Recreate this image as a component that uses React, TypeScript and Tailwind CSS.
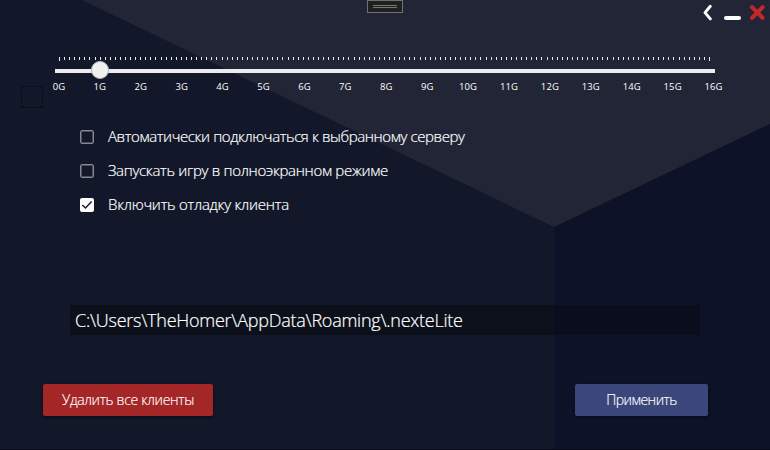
import React, { useState } from "react";

const TICKS = Array.from({ length: 129 }, (_, i) => i);
const LABELS = Array.from({ length: 17 }, (_, i) => `${i}G`);

function Background() {
  return (
    <svg className="absolute inset-0 -z-10 h-full w-full" viewBox="0 0 770 450" aria-hidden="true">
      <rect width="770" height="450" fill="#121729" />
      <path d="M554 227L770 124V450H554Z" fill="#0e1228" />
      <path d="M82 0H770V124L554 227Z" fill="#222535" />
      <rect y="449" width="770" height="1" fill="#080b18" />
    </svg>
  );
}

function TitleBar() {
  return (
    <header className="flex h-[26px] items-start pl-[367px] pr-[5px]">
      <div className="flex h-[13px] w-9 flex-col items-center justify-center gap-px border border-[#70716e] bg-[#1f211e]">
        <span className="h-px w-6 bg-[#777875]" />
        <span className="h-px w-6 bg-[#777875]" />
      </div>
      <div className="ml-auto flex h-[26px] items-center">
        <button aria-label="Назад" className="h-[26px] w-[10px]">
          <svg width="10" height="26" viewBox="0 0 10 26" fill="none" stroke="#fff" strokeWidth="3" strokeLinecap="round" strokeLinejoin="round">
            <path d="M7.3 6.3L2 12.6L7.3 18.9" />
          </svg>
        </button>
        <button aria-label="Свернуть" className="ml-[11px] mt-[10px] h-1 w-[17px] rounded-full bg-white" />
        <button aria-label="Закрыть" className="ml-2 h-[26px] w-4">
          <svg width="16" height="26" viewBox="0 0 16 26" fill="none" stroke="#c32828" strokeWidth="4" strokeLinecap="round">
            <path d="M3 7.2L13.6 17.8M13.6 7.2L3 17.8" />
          </svg>
        </button>
      </div>
    </header>
  );
}

function MemorySlider() {
  return (
    <section className="pt-[31px]">
      <div className="ml-[59px] flex h-[12px] w-[652.5px] items-start justify-between">
        {TICKS.map((i) => (
          <span key={i} className={i === 0 || i === 128 ? "h-1 w-px bg-[#e9e9ee]" : "h-[3px] w-px bg-[#e9e9ee]"} />
        ))}
      </div>
      <div className="relative ml-[55px] h-1 w-[660px] bg-[#ebebf0]">
        <span className="absolute -top-2 left-9 h-[18px] w-[18px] rounded-full border border-[#b8b8b8] bg-[#f0f0f0]" />
      </div>
      <div className="ml-[38.5px] mt-[7px] grid h-[13px] w-[695.5px] grid-cols-[repeat(17,minmax(0,1fr))] text-center font-['Open_Sans','Noto_Sans',sans-serif] text-[9.5px] font-medium leading-[14px] tracking-[0.1px] text-white">
        {LABELS.map((label) => (
          <span key={label}>{label}</span>
        ))}
      </div>
    </section>
  );
}

type OptionProps = { label: string; initial?: boolean; tracking: string };

function Option({ label, initial = false, tracking }: OptionProps) {
  const [checked, setChecked] = useState(initial);
  return (
    <button
      role="checkbox"
      aria-checked={checked}
      onClick={() => setChecked(!checked)}
      className="flex h-[34px] w-max items-center whitespace-nowrap text-left"
    >
      <span className={checked ? "flex h-[14px] w-[14px] items-center justify-center rounded-[2px] bg-white" : "h-[14px] w-[14px] rounded-[2px] border border-[#85868f] shadow-[inset_0_0_0_1px_#4c4f5c]"}>
        {checked && (
          <svg width="12" height="10" viewBox="0 0 12 10" fill="none" stroke="#191d2d" strokeWidth="1.5">
            <path d="M1.3 5L4.5 8L10.6 1.5" />
          </svg>
        )}
      </span>
      <span className={`-mt-0.5 ml-[14px] text-[15px] font-light leading-5 [-webkit-text-stroke:0.2px_white] ${tracking}`}>{label}</span>
    </button>
  );
}

export default function App() {
  return (
    <main className="relative isolate flex h-[450px] w-[770px] flex-col overflow-hidden font-['Open_Sans','Noto_Sans',sans-serif] text-white">
      <Background />
      <TitleBar />
      <MemorySlider />
      <div className="-mt-[7px] ml-[21px] h-[22px] w-[22px] border border-dashed border-[#080b14]" />
      <section className="ml-20 mt-[12px] flex flex-col">
        <Option label="Автоматически подключаться к выбранному серверу" tracking="tracking-[-0.39px]" />
        <Option label="Запускать игру в полноэкранном режиме" tracking="tracking-[-0.31px]" />
        <Option label="Включить отладку клиента" initial tracking="tracking-[-0.25px]" />
      </section>
      <div className="ml-[70px] mt-[83px] flex h-[30px] w-[630px] items-center bg-[#06090a]/45 pl-[5px] text-[18px] font-light tracking-[-0.25px] [-webkit-text-stroke:0.2px_white]">
        C:\Users\TheHomer\AppData\Roaming\.nexteLite
      </div>
      <footer className="ml-[43px] mr-[62px] mt-[49px] flex justify-between text-[14px] font-light [-webkit-text-stroke:0.15px_white]">
        <button className="h-8 w-[170px] whitespace-nowrap rounded-[2px] bg-[#a42626] pb-px tracking-[-0.32px] shadow-[0_1px_3px_#0008]">
          Удалить все клиенты
        </button>
        <button className="h-8 w-[133px] whitespace-nowrap rounded-[2px] bg-[#3b467b] pb-px tracking-[-0.5px] shadow-[0_1px_3px_#0008]">
          Применить
        </button>
      </footer>
    </main>
  );
}
